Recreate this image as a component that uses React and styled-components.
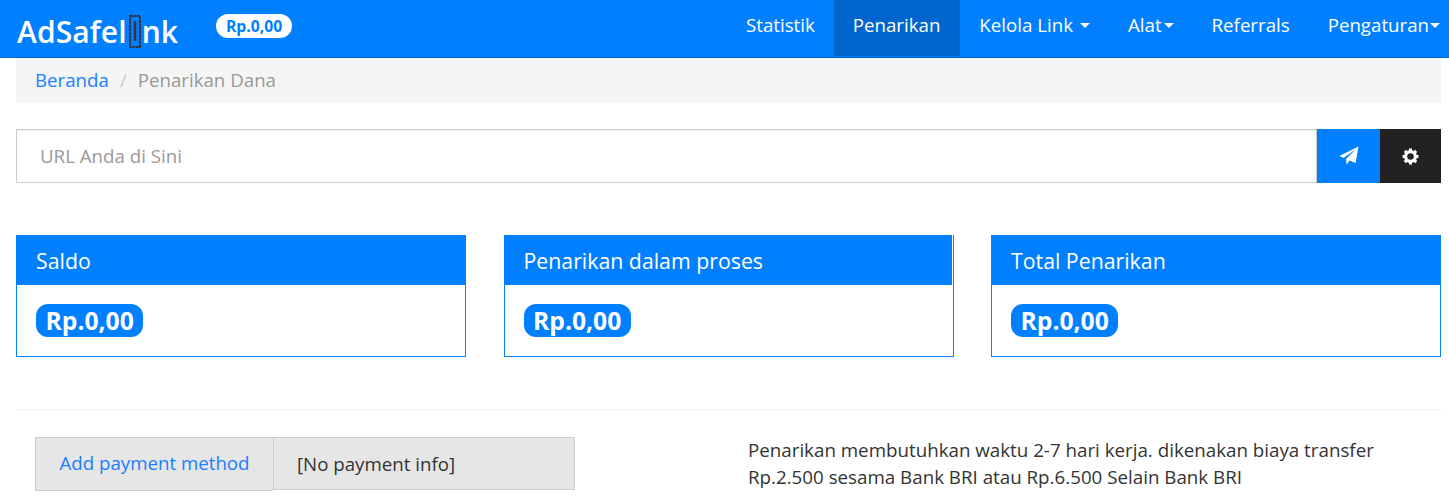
import React from 'react';
import styled, { createGlobalStyle } from 'styled-components';

const Global = createGlobalStyle`
  html, body { margin: 0; padding: 0; background: #fff; }
  body { font-family: "Open Sans", "Liberation Sans", sans-serif; font-size: 18.7px; color: #333; overflow: hidden; }
  * { box-sizing: border-box; }
`;
const Page = styled.div`width: 1449px; height: 504px; overflow: hidden;`;
const Navbar = styled.header`
  height: 58px; background: #007fff; border-bottom: 1px solid #0065cc;
  display: flex; align-items: flex-start; justify-content: space-between;
`;
const Brand = styled.div`display: flex; align-items: flex-start; padding-left: 17px;`;
const Logo = styled.div`
  display: flex; align-items: center; margin-top: 8px; width: 199px; height: 48px;
  font-size: 30px; font-weight: 600; line-height: 48px; color: #fff; letter-spacing: .1px;
`;
const Balance = styled.span`
  margin-top: 14px; height: 24px; padding: 0 10px; border-radius: 12px; background: #fff; color: #007fff;
  font-size: 15.7px; font-weight: 700; line-height: 24px;
`;
const Menu = styled.nav`display: flex; height: 56px;`;
const MenuItem = styled.a`
  display: flex; align-items: flex-start; height: 56px; padding: 12px ${p => p.$pr ?? 19}px 0 19px;
  font-size: 18.7px; line-height: 25px; color: #fff; background: ${p => (p.$active ? '#0065cc' : 'transparent')};
`;
const Caret = styled.i`
  display: block; width: 0; height: 0; margin-left: ${p => p.$gap}px; margin-top: 11px;
  border-left: 5px solid transparent; border-right: 5px solid transparent; border-top: 5px solid #fff;
`;
const Content = styled.main`padding: 0 8px 0 16px;`;
const Breadcrumb = styled.div`
  height: 45px; background: #f5f5f5; padding: 0 19px 2px; display: flex; align-items: center; gap: 11px;
  font-size: 18.7px; color: #999;
`;
const Crumb = styled.a`color: #1a7fff;`;
const Sep = styled.span`color: #ccc;`;
const ShortenRow = styled.div`display: flex; height: 54px; margin-top: 26px;`;
const UrlInput = styled.div`
  flex: 1; border: 1px solid #ccc; box-shadow: inset 0 1px 1px rgba(0,0,0,.075);
  padding: 0 23px 2px; display: flex; align-items: center; font-size: 18.7px; color: #999;
`;
const IconButton = styled.button`
  border: 0; padding: 0; width: ${p => p.$w}px; background: ${p => p.$bg}; color: #fff;
  display: flex; align-items: center; justify-content: center;
`;
const Cards = styled.section`display: grid; grid-template-columns: 450px 450px 450px; justify-content: space-between; margin-top: 52px;`;
const Card = styled.article`height: 122px; border: 1px solid #007fff; border-top: 0;`;
const CardHeader = styled.div`
  height: 50px; margin-left: -1px; ${p => (p.$short ? 'margin-right: 1px;' : 'margin-right: -1px;')}
  padding: 0 20px; background: #007fff; color: #fff; font-size: 21.3px; line-height: 52px;
`;
const CardBody = styled.div`padding: 19px 19px 0;`;
const Amount = styled.span`
  display: inline-block; height: 33px; padding: 0 9.5px; border-radius: 12px; background: #007fff; color: #fff;
  font-size: 24.7px; font-weight: 700; line-height: 33px;
`;
const Rule = styled.hr`border: 0; border-top: 1px solid #eee; margin: 52px 0 27px;`;
const Bottom = styled.section`display: flex; align-items: flex-start;`;
const PayGroup = styled.div`display: flex; align-items: flex-start; margin-left: 19px; width: 540px;`;
const PayAddon = styled.a`
  width: 238px; height: 54px; background: #e6e6e6; border: 1px solid #ccc; border-right: 0; color: #1a7fff;
  font-size: 18.7px; line-height: 49px; text-align: center;
`;
const PayInfo = styled.div`
  flex: 1; height: 53px; background: #e6e6e6; border: 1px solid #ccc; padding: 0 23px;
  font-size: 18.7px; line-height: 52px; color: #333;
`;
const Note = styled.p`margin: -1px 0 0 173px; width: 660px; font-size: 18.75px; line-height: 27px; color: #333;`;

const Clip = () => (
  <svg width="12" height="33" viewBox="0 0 12 33" style={{ margin: '-1px 1px 0 2px' }}>
    <rect x="1" y="1" width="10" height="31" fill="none" stroke="#2c3645" strokeWidth="2.2" strokeDasharray="3 .5" />
    <rect x="4.8" y="6" width="2.4" height="20" fill="#2c3645" />
  </svg>
);
const Send = () => (
  <svg width="20" height="20" viewBox="0 0 20 20"><path fill="#fff" d="M19.5 .5 L16.6 17 L10.6 14.5 L7.6 18.8 L7 13 L16.5 3.5 L4.8 11.8 L.3 10 Z" /></svg>
);
const Gear = () => (
  <svg width="17" height="17" viewBox="0 0 18 18">
    <circle cx="9" cy="9" r="5.2" fill="none" stroke="#fff" strokeWidth="3.4" />
    <g stroke="#fff" strokeWidth="3.2">
      <path d="M9 .6V3.5M9 14.5v2.9M.6 9h2.9M14.5 9h2.9M3 3l2.1 2.1M12.9 12.9 15 15M3 15l2.1-2.1M12.9 5.1 15 3" />
    </g>
  </svg>
);

const cards = [
  { title: 'Saldo' },
  { title: 'Penarikan dalam proses', short: true },
  { title: 'Total Penarikan' },
];

export default function App() {
  return (
    <Page>
      <Global />
      <Navbar>
        <Brand>
          <Logo>AdSafel<Clip />nk</Logo>
          <Balance>Rp.0,00</Balance>
        </Brand>
        <Menu>
          <MenuItem $pr={19}>Statistik</MenuItem>
          <MenuItem $active $pr={20}>Penarikan</MenuItem>
          <MenuItem>Kelola Link<Caret $gap={7} /></MenuItem>
          <MenuItem>Alat<Caret $gap={2} /></MenuItem>
          <MenuItem>Referrals</MenuItem>
          <MenuItem $pr={9}>Pengaturan<Caret $gap={1} /></MenuItem>
        </Menu>
      </Navbar>
      <Content>
        <Breadcrumb>
          <Crumb>Beranda</Crumb><Sep>/</Sep><span>Penarikan Dana</span>
        </Breadcrumb>
        <ShortenRow>
          <UrlInput>URL Anda di Sini</UrlInput>
          <IconButton $w={63} $bg="#007fff"><Send /></IconButton>
          <IconButton $w={61} $bg="#222"><Gear /></IconButton>
        </ShortenRow>
        <Cards>
          {cards.map(c => (
            <Card key={c.title}>
              <CardHeader $short={c.short}>{c.title}</CardHeader>
              <CardBody><Amount>Rp.0,00</Amount></CardBody>
            </Card>
          ))}
        </Cards>
        <Rule />
        <Bottom>
          <PayGroup>
            <PayAddon>Add payment method</PayAddon>
            <PayInfo>[No payment info]</PayInfo>
          </PayGroup>
          <Note>Penarikan membutuhkan waktu 2-7 hari kerja. dikenakan biaya transfer Rp.2.500 sesama Bank BRI atau Rp.6.500 Selain Bank BRI</Note>
        </Bottom>
      </Content>
    </Page>
  );
}
